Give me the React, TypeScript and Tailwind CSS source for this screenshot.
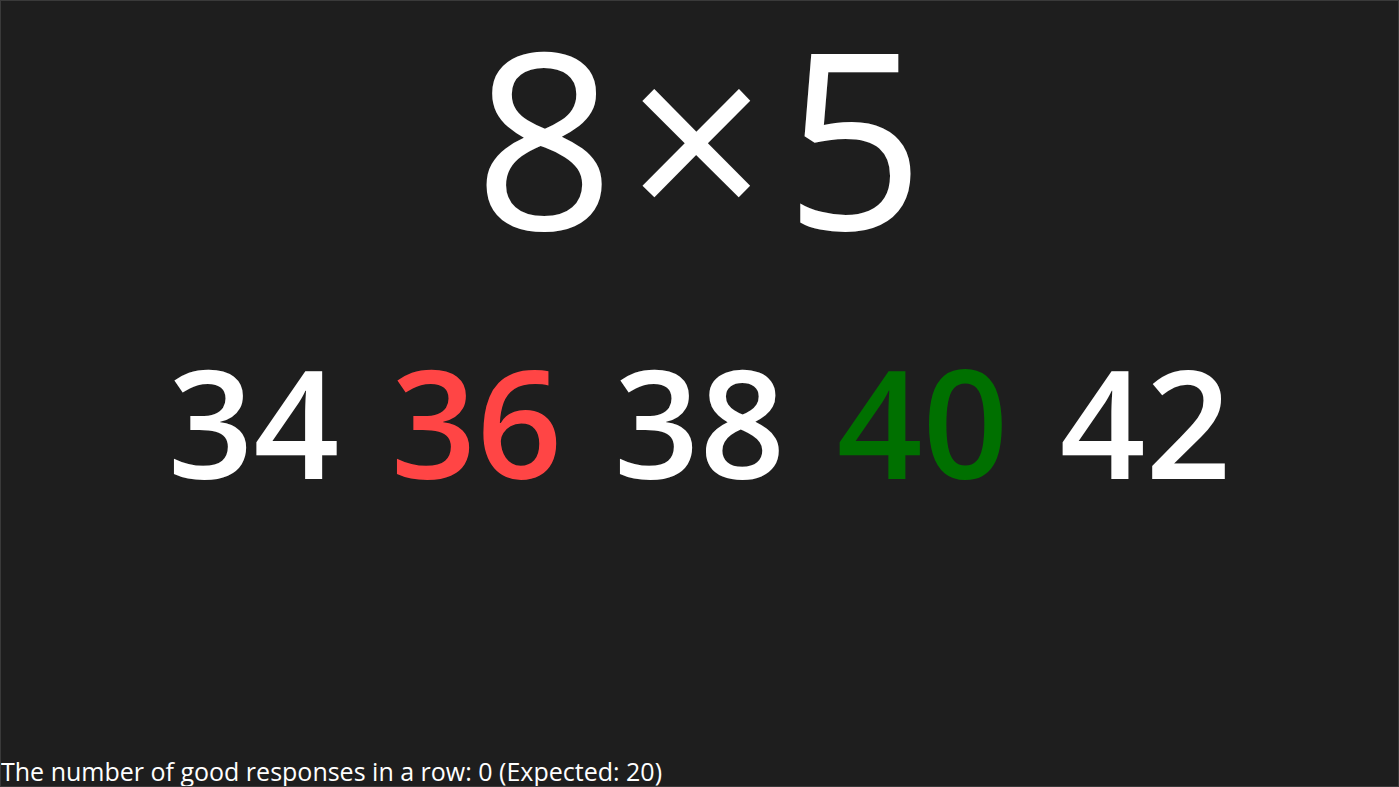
import React from "react";

const choices = [
  { value: 34, color: "text-white" },
  { value: 36, color: "text-[#ff4545]" },
  { value: 38, color: "text-white" },
  { value: 40, color: "text-[#007000]" },
  { value: 42, color: "text-white" },
];

const App: React.FC = () => {
  return (
    <div className="h-[787px] w-full bg-[#1e1e1e] border border-[#3a3a3a] flex flex-col overflow-hidden font-['Open_Sans','Noto_Sans',sans-serif]">
      {/* question */}
      <div className="flex justify-center">
        <h1 className="text-[245px] font-normal leading-[1.1] text-white">
          8<span className="ml-[12px] mr-[18px]">×</span>5
        </h1>
      </div>

      {/* answers */}
      <div className="mt-[75px] flex items-center justify-center">
        {choices.map((c) => (
          <div key={c.value} className={`w-[223px] text-center text-[150px] font-semibold leading-none ${c.color}`}>
            {c.value}
          </div>
        ))}
      </div>

      <div className="flex-1" />

      <p className="text-[25px] leading-[30px] text-white">
        The number of good responses in a row: 0 (Expected: 20)
      </p>
    </div>
  );
};

export default App;
